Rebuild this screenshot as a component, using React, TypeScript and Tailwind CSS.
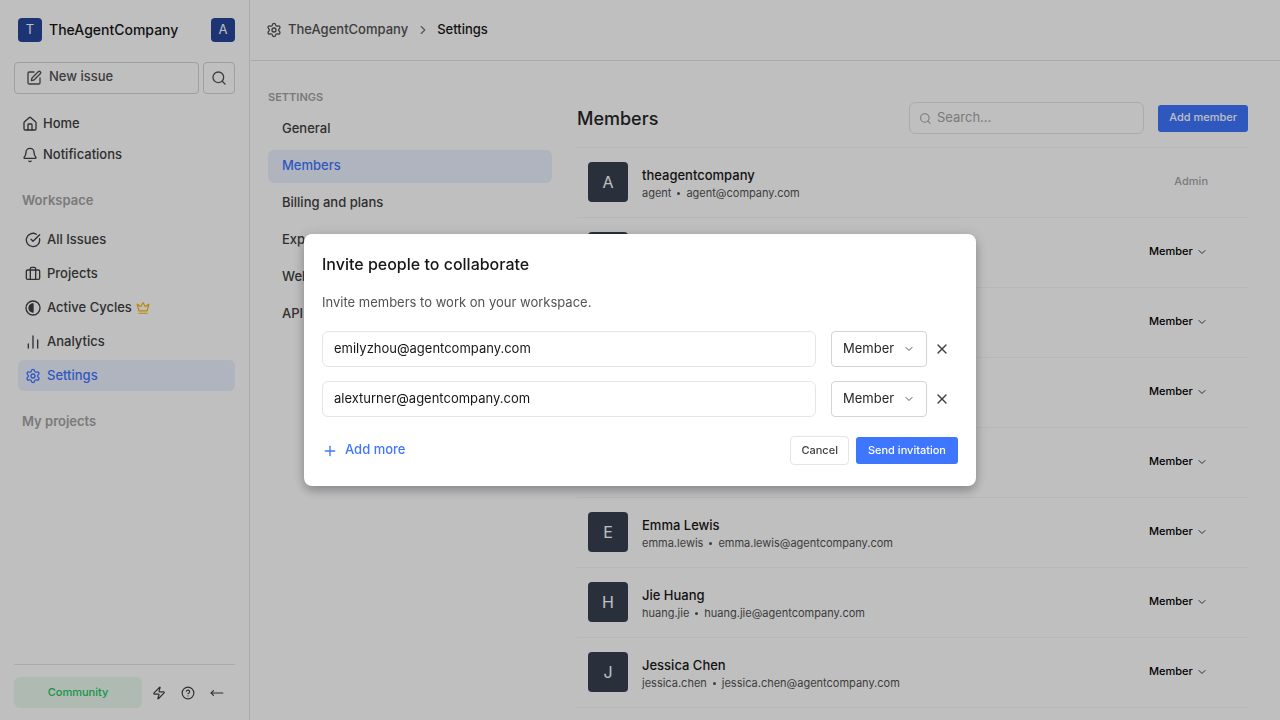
import type { ReactNode } from "react";
import {
  Bell, Briefcase, ChartNoAxesColumn, ChevronDown, ChevronRight, CircleCheckBig, CircleQuestionMark,
  Crown, House, MoveLeft, Plus, Search, Settings, SquarePen, X, Zap,
} from "lucide-react";

type Member = { initial: string; name: string; handle: string; email: string; role: string };

const members: Member[] = [
  { initial: "A", name: "theagentcompany", handle: "agent", email: "agent@company.com", role: "Admin" },
  { initial: "C", name: "Chen Xinyi", handle: "chen.xinyi", email: "chen.xinyi@agentcompany.com", role: "Member" },
  { initial: "D", name: "David Wong", handle: "david.wong", email: "david.wong@agentcompany.com", role: "Member" },
  { initial: "E", name: "Emily Zhou", handle: "emily.zhou", email: "emily.zhou@agentcompany.com", role: "Member" },
  { initial: "A", name: "Alex Turner", handle: "alex.turner", email: "alex.turner@agentcompany.com", role: "Member" },
  { initial: "E", name: "Emma Lewis", handle: "emma.lewis", email: "emma.lewis@agentcompany.com", role: "Member" },
  { initial: "H", name: "Jie Huang", handle: "huang.jie", email: "huang.jie@agentcompany.com", role: "Member" },
  { initial: "J", name: "Jessica Chen", handle: "jessica.chen", email: "jessica.chen@agentcompany.com", role: "Member" },
];

const settingsLinks = ["General", "Members", "Billing and plans", "Exports", "Webhooks", "API tokens"];
const invites = ["emilyzhou@agentcompany.com", "alexturner@agentcompany.com"];

function HalfCircle() {
  return (
    <svg width="16" height="16" viewBox="0 0 24 24" fill="none" stroke="currentColor" strokeWidth="2" aria-hidden="true">
      <circle cx="12" cy="12" r="10.5" />
      <path d="M12 6a6 6 0 0 0 0 12z" fill="currentColor" />
    </svg>
  );
}

function SideLink({ icon, active, children }: { icon: ReactNode; active?: boolean; children: ReactNode }) {
  return (
    <a
      href="#"
      className={
        active
          ? "flex h-[31px] items-center gap-1.5 rounded-md bg-[#ebf1ff] px-[7px] text-[#3f76ff]"
          : "flex h-[31px] items-center gap-1.5 rounded-md px-[7px] text-[#404040]"
      }
    >
      {icon}
      {children}
    </a>
  );
}

function RoleSelect({ label, boxed }: { label: string; boxed?: boolean }) {
  return (
    <div
      className={
        boxed
          ? "relative flex h-full items-center rounded border border-[#d4d4d4] text-[13px] text-[#262626]"
          : "relative flex items-center text-[11px] font-medium text-black"
      }
    >
      <select
        aria-label={label}
        defaultValue="Member"
        className={
          boxed
            ? "h-full w-[94px] appearance-none bg-transparent pr-7 pl-[11px] outline-none"
            : "appearance-none bg-transparent pr-[15px] outline-none"
        }
      >
        <option>Guest</option>
        <option>Member</option>
        <option>Admin</option>
      </select>
      <ChevronDown
        size={12}
        className={
          boxed
            ? "pointer-events-none absolute right-[11px] text-[#525252]"
            : "pointer-events-none absolute right-0 text-[#404040]"
        }
      />
    </div>
  );
}

function Sidebar() {
  return (
    <aside className="flex w-[250px] shrink-0 flex-col border-r border-[#e5e5e5] px-3.5 text-[13px] font-medium">
      <div className="mt-[18px] flex items-center pl-1">
        <span className="grid size-6 place-items-center rounded bg-[#26469b] text-[13px] font-normal text-white">T</span>
        <span className="ml-[7px] text-sm text-[#171717]">TheAgentCompany</span>
        <span className="ml-auto grid size-6 place-items-center rounded bg-[#26469b] text-[13px] font-normal text-white">A</span>
      </div>
      <div className="mt-5 flex gap-1">
        <button className="flex h-8 grow items-center gap-[7px] rounded border border-[#d4d4d4] px-[11px] text-[#525252]">
          <SquarePen size={16} />
          <span className="pb-0.5">New issue</span>
        </button>
        <button aria-label="Search" className="grid size-8 place-items-center rounded border border-[#d4d4d4] text-[#525252]">
          <Search size={16} />
        </button>
      </div>
      <nav aria-label="Main" className="mt-3.5 text-[#404040]">
        <a href="#" className="flex h-[31px] items-center gap-[5px] px-2"><House size={16} />Home</a>
        <a href="#" className="flex h-[31px] items-center gap-[5px] px-2"><Bell size={16} />Notifications</a>
      </nav>
      <h2 className="mt-5 px-2 leading-5 font-semibold text-[#a3a3a3]">Workspace</h2>
      <nav aria-label="Workspace" className="mt-3.5 ml-1 flex flex-col gap-[3px]">
        <SideLink icon={<CircleCheckBig size={16} />}>All Issues</SideLink>
        <SideLink icon={<Briefcase size={16} />}>Projects</SideLink>
        <SideLink icon={<HalfCircle />}>
          <span className="flex items-center gap-1">Active Cycles<Crown size={14} className="text-[#f5b70b]" /></span>
        </SideLink>
        <SideLink icon={<ChartNoAxesColumn size={16} />}>Analytics</SideLink>
        <SideLink icon={<Settings size={16} />} active>Settings</SideLink>
      </nav>
      <h2 className="mt-5 px-2 leading-5 font-semibold text-[#a3a3a3]">My projects</h2>
      <div className="mt-auto mb-3 flex items-center border-t border-[#e5e5e5] pt-3 text-[#404040]">
        <button className="h-[31px] w-32 rounded-md bg-[#e8f9ee] text-[11px] font-medium text-[#22c55e]">Community</button>
        <div className="ml-2.5 flex items-center gap-[15px]">
          <button aria-label="Shortcuts"><Zap size={14} /></button>
          <button aria-label="Help"><CircleQuestionMark size={14} /></button>
          <button aria-label="Collapse sidebar"><MoveLeft size={14} /></button>
        </div>
      </div>
    </aside>
  );
}

function MembersPanel() {
  return (
    <section className="min-w-0 grow">
      <div className="flex h-[87px] items-center border-b border-[#f5f5f5] pt-[28px]">
        <h1 className="pt-0.5 text-lg font-medium text-[#262626]">Members</h1>
        <label className="ml-auto flex h-8 w-[235px] items-center gap-[5px] rounded-md border border-[#e5e5e5] px-[9px]">
          <Search size={13} className="text-[#a3a3a3]" />
          <input
            aria-label="Search members"
            placeholder="Search..."
            className="min-w-0 grow bg-transparent text-[13px] outline-none placeholder:text-[#a3a3a3]"
          />
        </label>
        <button className="ml-3.5 h-[27px] rounded-[3px] bg-[#3f76ff] px-[11px] pb-0.5 text-[11px] font-medium text-white">
          Add member
        </button>
      </div>
      <ul>
        {members.map((m) => (
          <li key={m.email} className="flex h-[70px] items-center border-b border-[#f5f5f5] pr-10 pb-0.5 pl-[11px]">
            <span className="grid size-10 shrink-0 place-items-center rounded bg-[#374151] text-base text-white">{m.initial}</span>
            <div className="ml-3.5 min-w-0 grow pt-[5px]">
              <h3 className="text-[13px] leading-[18px] font-medium text-[#171717]">{m.name}</h3>
              <p className="flex items-center gap-1.5 text-[11px] leading-[18px] text-[#525252]">
                {m.handle}
                <span className="size-[3px] rounded-full bg-[#525252]" />
                {m.email}
              </p>
            </div>
            {m.role === "Admin" ? (
              <span className="text-[11px] font-medium text-[#a3a3a3]">Admin</span>
            ) : (
              <RoleSelect label={`Role of ${m.name}`} />
            )}
          </li>
        ))}
      </ul>
    </section>
  );
}

function InviteDialog() {
  return (
    <div className="fixed inset-0 flex items-center justify-center bg-black/25 p-4">
      <form
        role="dialog"
        aria-modal="true"
        aria-labelledby="invite-title"
        onSubmit={(e) => e.preventDefault()}
        className="w-full max-w-2xl rounded-lg bg-white px-[18px] pt-[18px] pb-[21px] shadow-[0_4px_8px_rgba(0,0,0,0.12),0_6px_12px_rgba(16,24,40,0.12),0_1px_16px_rgba(16,24,40,0.12)]"
      >
        <h2 id="invite-title" className="text-base leading-6 font-medium text-[#171717]">Invite people to collaborate</h2>
        <p className="mt-4 text-[13px] leading-5 text-[#525252]">Invite members to work on your workspace.</p>
        <div className="mt-[19px] flex flex-col gap-3.5">
          {invites.map((email) => (
            <div key={email} className="flex h-9 items-center">
              <input
                type="email"
                aria-label="Email"
                defaultValue={email}
                className="mr-[15px] h-full min-w-0 grow rounded-md border border-[#e5e5e5] px-[11px] pb-0.5 text-[13px] text-[#171717] outline-none"
              />
              <RoleSelect label={`Role for ${email}`} boxed />
              <button type="button" aria-label={`Remove ${email}`} className="mr-2 ml-[7px] text-[#404040]">
                <X size={16} />
              </button>
            </div>
          ))}
        </div>
        <div className="mt-[19px] flex items-center">
          <button type="button" className="flex items-center gap-[7px] text-[13px] font-medium text-[#3f76ff]">
            <Plus size={16} />
            <span className="pb-0.5">Add more</span>
          </button>
          <button type="button" className="ml-auto h-[29px] rounded border border-[#e5e5e5] px-2.5 text-[11px] font-medium text-[#404040]">
            Cancel
          </button>
          <button type="submit" className="ml-[7px] h-[27px] rounded-[3px] bg-[#3f76ff] px-3 text-[11px] font-medium text-white">
            Send invitation
          </button>
        </div>
      </form>
    </div>
  );
}

export default function App() {
  return (
    <div className="flex h-screen overflow-hidden bg-white font-['Inter',sans-serif]">
      <Sidebar />
      <main className="flex min-w-0 grow flex-col">
        <header className="flex h-[61px] shrink-0 items-center border-b border-[#e5e5e5] px-4 text-[13px] font-medium text-[#525252]">
          <Settings size={16} />
          <a href="#" className="ml-1.5">TheAgentCompany</a>
          <ChevronRight size={14} className="mr-[7px] ml-2 text-[#737373]" />
          <span className="text-[#171717]">Settings</span>
        </header>
        <div className="flex min-h-0 grow gap-[25px] overflow-hidden pr-8 pl-[18px]">
          <nav aria-label="Settings" className="w-[284px] shrink-0 pt-7">
            <h2 className="text-[11px] leading-4 font-semibold text-[#a3a3a3]">SETTINGS</h2>
            <div className="mt-2 flex flex-col gap-1 text-[13px] font-medium">
              {settingsLinks.map((link) => (
                <a
                  key={link}
                  href="#"
                  className={
                    link === "Members"
                      ? "flex h-[33px] items-center rounded-md bg-[#ebf1ff] px-3.5 pb-0.5 text-[#3f76ff]"
                      : "flex h-[33px] items-center rounded-md px-3.5 pb-0.5 text-[#404040]"
                  }
                >
                  {link}
                </a>
              ))}
            </div>
          </nav>
          <MembersPanel />
        </div>
      </main>
      <InviteDialog />
    </div>
  );
}
